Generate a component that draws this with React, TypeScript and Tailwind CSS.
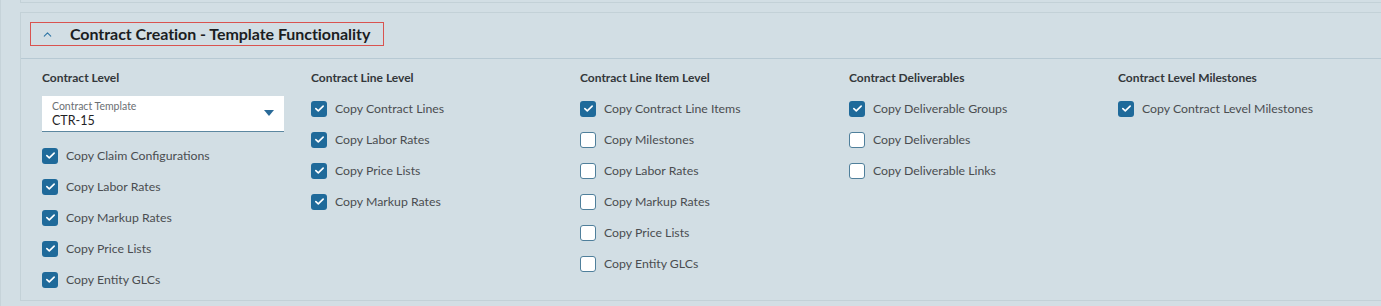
import { ChevronUp } from "lucide-react";

type Item = { label: string; checked: boolean };
type Column = { title: string; items: Item[]; select?: boolean };

const COLUMNS: Column[] = [
  {
    title: "Contract Level",
    select: true,
    items: [
      { label: "Copy Claim Configurations", checked: true },
      { label: "Copy Labor Rates", checked: true },
      { label: "Copy Markup Rates", checked: true },
      { label: "Copy Price Lists", checked: true },
      { label: "Copy Entity GLCs", checked: true },
    ],
  },
  {
    title: "Contract Line Level",
    items: [
      { label: "Copy Contract Lines", checked: true },
      { label: "Copy Labor Rates", checked: true },
      { label: "Copy Price Lists", checked: true },
      { label: "Copy Markup Rates", checked: true },
    ],
  },
  {
    title: "Contract Line Item Level",
    items: [
      { label: "Copy Contract Line Items", checked: true },
      { label: "Copy Milestones", checked: false },
      { label: "Copy Labor Rates", checked: false },
      { label: "Copy Markup Rates", checked: false },
      { label: "Copy Price Lists", checked: false },
      { label: "Copy Entity GLCs", checked: false },
    ],
  },
  {
    title: "Contract Deliverables",
    items: [
      { label: "Copy Deliverable Groups", checked: true },
      { label: "Copy Deliverables", checked: false },
      { label: "Copy Deliverable Links", checked: false },
    ],
  },
  {
    title: "Contract Level Milestones",
    items: [{ label: "Copy Contract Level Milestones", checked: true }],
  },
];

const Checkbox = ({ label, checked }: Item) => (
  <label className="h-[31px] flex items-center gap-2 cursor-pointer">
    <span
      className={
        checked
          ? "w-4 h-4 rounded-[3px] bg-[#1f6a9a] flex items-center justify-center"
          : "w-4 h-4 rounded-[3px] bg-white border-[1.5px] border-[#4f7f9b]"
      }
    >
      {checked && (
        <svg viewBox="0 0 16 16" className="w-[13px] h-[13px]" fill="none">
          <path
            d="M3.5 8.2l3 2.8 6-6"
            stroke="white"
            strokeWidth="2"
            strokeLinecap="round"
            strokeLinejoin="round"
          />
        </svg>
      )}
    </span>
    <span className="text-[12.3px] text-[#4a4d50] leading-4">{label}</span>
  </label>
);

const TemplateSelect = () => (
  <div className="mt-[3px] w-[242px] h-9 bg-white border-b border-[#5c87a0] flex items-center justify-between pl-[10px] pr-[10px]">
    <div className="flex flex-col">
      <span className="text-[10.5px] leading-[13px] text-[#6b6f73]">
        Contract Template
      </span>
      <span className="text-[12.5px] leading-[15px] text-[#1f2225]">CTR-15</span>
    </div>
    <svg viewBox="0 0 10 6" className="w-[10px] h-[6px] mt-[-2px]">
      <path d="M0 0h10L5 6z" fill="#2a6a98" />
    </svg>
  </div>
);

export default function App() {
  return (
    <div
      className="w-full h-[306px] bg-[#d2dee4] flex overflow-hidden"
      style={{ fontFamily: "Lato, 'Noto Sans', sans-serif" }}
    >
      <div className="w-[3px] bg-[#e6edf0] border-r border-[#c6d3d9]" />
      <div className="flex-1 flex flex-col pl-[19px] pr-[5px]">
        <div className="h-[3px] border-x border-b border-[#c3d1d7]" />
        <section className="mt-[9px] h-[289px] border border-[#c3d1d7] flex flex-col">
          <div className="h-[46px] border-b border-[#b7c9d3] flex items-start pt-[9px] pl-[9px]">
            <button className="h-[24px] w-[354px] border border-[#d9534f] flex items-center pl-[10px] gap-[16px]">
              <ChevronUp className="w-[13px] h-[13px] text-[#2f76a6]" strokeWidth={2} />
              <span className="text-[16px] font-bold text-[#1b1d1f] tracking-[-0.05px]">
                Contract Creation - Template Functionality
              </span>
            </button>
          </div>
          <div className="grid grid-cols-[269px_269px_269px_269px_269px] pl-[21px] pt-[11px]">
            {COLUMNS.map((col) => (
              <div key={col.title} className="flex flex-col">
                <h3 className="h-4 leading-4 text-[12px] font-bold text-[#33373a]">
                  {col.title}
                </h3>
                <div className="mt-[7px] flex flex-col">
                  {col.select && <TemplateSelect />}
                  <div className={col.select ? "mt-2 flex flex-col" : "flex flex-col"}>
                    {col.items.map((item, i) => (
                      <Checkbox key={`${col.title}-${i}`} {...item} />
                    ))}
                  </div>
                </div>
              </div>
            ))}
          </div>
        </section>
      </div>
    </div>
  );
}
